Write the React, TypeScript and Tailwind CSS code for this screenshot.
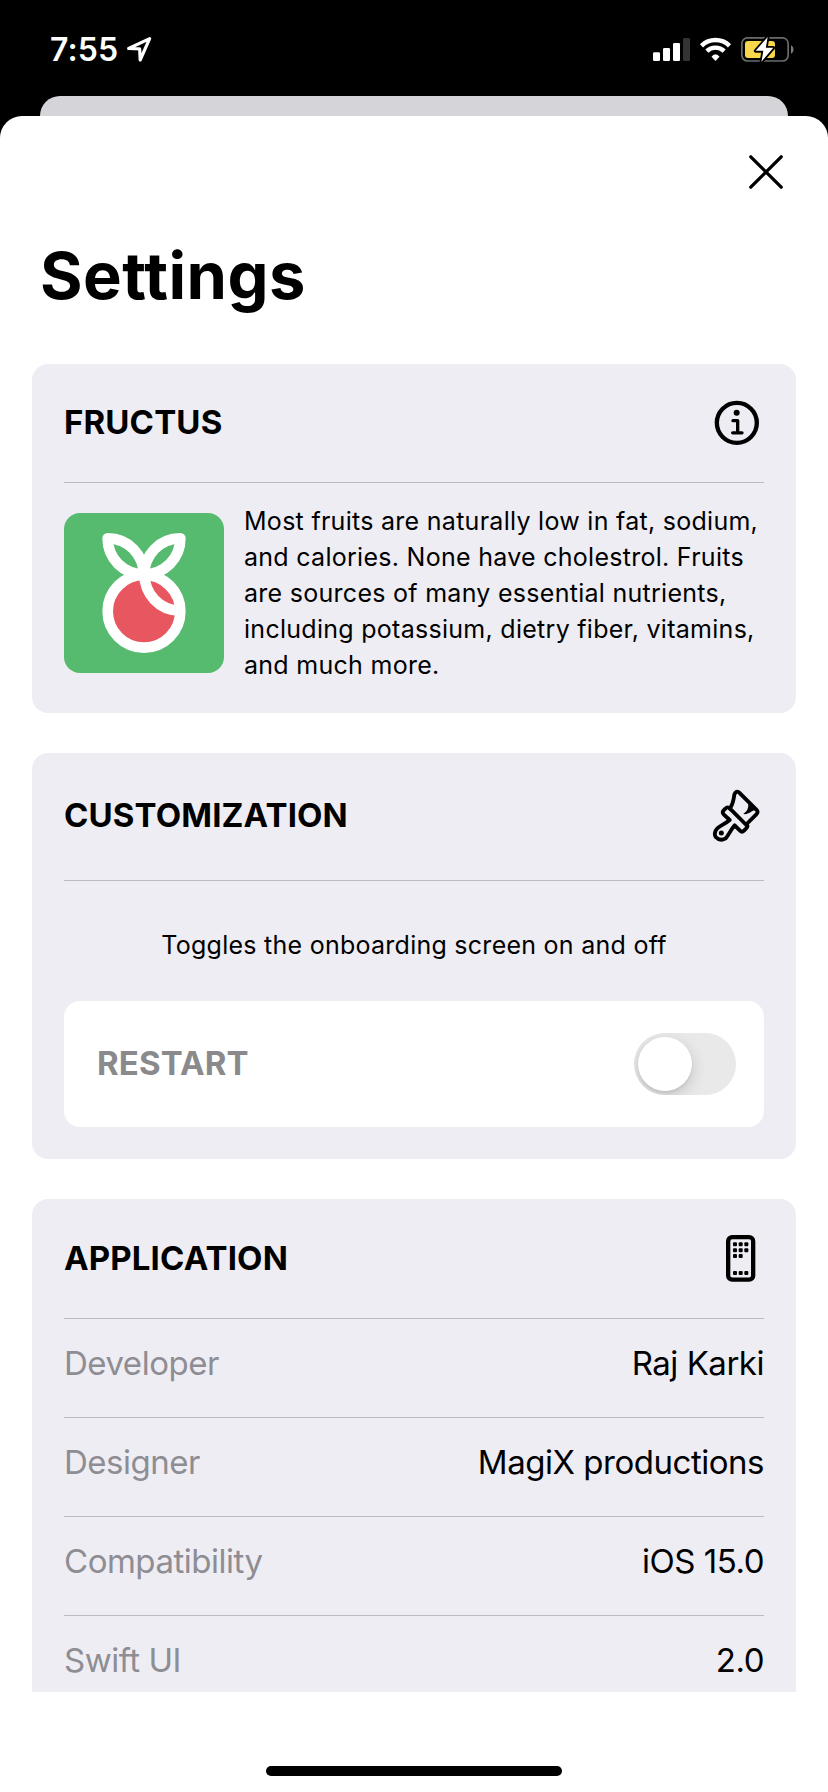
import type { ReactNode } from "react";

function LocationArrow() {
  return (
    <svg viewBox="378 110 80 80" className="h-[26.67px] w-[26.67px]" fill="none">
      <path
        d="M449 118 L386 147.5 L419 148.5 L420.5 182 Z"
        stroke="#fff"
        strokeWidth="9.5"
        strokeLinejoin="round"
      />
    </svg>
  );
}

function StatusIcons() {
  return (
    <svg viewBox="66 48 430 82" className="h-[27.33px] w-[143.33px]" fill="none">
      <rect x="69" y="96.5" width="21" height="26.5" rx="4" fill="#fff" />
      <rect x="99" y="84" width="21" height="39" rx="4" fill="#fff" />
      <rect x="129" y="69" width="21" height="54" rx="4" fill="#fff" />
      <rect x="159" y="54" width="21" height="69" rx="4" fill="#333335" />

      <path d="M214.500 77.500 A60 60 0 0 1 298.500 77.500" stroke="#fff" strokeWidth="13.500" />
      <path d="M230.500 93.500 A37 37 0 0 1 282.500 93.500" stroke="#fff" strokeWidth="13" />
      <path d="M256.500 123 L244.500 110.500 Q249 103 256.500 103 Q264 103 268.500 110.500 Z" fill="#fff" />

      <rect x="335.5" y="53.5" width="139" height="69.500" rx="17" stroke="#6b6b6b" strokeWidth="5" />
      <path d="M483 76 C493 80 493 97 483 101 Z" fill="#7a7a7a" />
      <rect x="345" y="63" width="90" height="51" rx="9" fill="#f8d84a" />
      <path
        d="M413 51 L377 92.500 H400 L394.500 125 L430 83.500 H407.500 Z"
        fill="#fff"
        stroke="#000"
        strokeWidth="11"
        strokeLinejoin="round"
        paintOrder="stroke"
      />
    </svg>
  );
}

function CloseIcon() {
  return (
    <svg viewBox="0 0 36 36" className="size-9" fill="none">
      <path d="M2.800 2.800 L33.200 33.200 M33.200 2.800 L2.800 33.200" stroke="#000" strokeWidth="3.300" strokeLinecap="round" />
    </svg>
  );
}

function InfoIcon() {
  return (
    <svg viewBox="73 120 138 138" className="mr-[4px] size-[46px]" fill="none">
      <circle cx="141.500" cy="188.500" r="60" stroke="#000" strokeWidth="13" />
      <circle cx="141" cy="158" r="9" fill="#000" />
      <path
        d="M130 182 H144 V218 M129 218.500 H157"
        stroke="#000"
        strokeWidth="10"
        strokeLinecap="round"
        strokeLinejoin="round"
      />
    </svg>
  );
}

function PaintbrushIcon() {
  return (
    <svg viewBox="66 58 144 160" className="mr-[4px] h-[53.33px] w-[48px]" fill="none">
      <g stroke="#000" strokeWidth="11.500" strokeLinecap="round" strokeLinejoin="round">
        <path d="M122 113 C130 100 131 88 133 75 Q137 62 147 68 L199 120 Q206 127 199 134 L170 163" />
        <path d="M120 117 L172 169" />
        <path d="M120 117 Q113 109 106 117 L101 122 Q95 128 101 134 L119 151 C104 164 92 167 82 176 Q70 188 77 202 Q90 216 107 206 C117 196 120 182 134 167 L150 183 Q156 189 162 183 L168 177 Q175 171 170 163" />
      </g>
      <path d="M174 101 L195 122 C182 124 176 136 160 133 C172 125 177 114 174 101 Z" fill="#000" />
      <circle cx="94" cy="190" r="7.500" fill="#000" />
    </svg>
  );
}

const appDots = [
  [105, 103], [122, 103], [139, 103],
  [105, 120.5], [122, 120.5], [139, 120.5],
  [105, 138], [122, 138],
  [105, 189], [122, 189], [139, 189],
];

function PhoneIcon() {
  return (
    <svg viewBox="78 75 88 140" className="mr-[8.500px] h-[46.67px] w-[29.33px]" fill="none">
      <rect x="84.500" y="81.500" width="75" height="127.500" rx="12" stroke="#000" strokeWidth="13" />
      {appDots.map(([x, y]) => (
        <rect key={`${x}-${y}`} x={x - 6} y={y - 6} width="12" height="12" rx="3" fill="#000" />
      ))}
    </svg>
  );
}

function FruitLogo() {
  return (
    <svg viewBox="72 69 480 480" className="size-40 shrink-0 rounded-2xl bg-[#56bb6e]" fill="none">
      <circle cx="312" cy="364" r="109" fill="#e85660" />
      <g stroke="#fff" strokeWidth="32" strokeLinejoin="round">
        <circle cx="312" cy="364" r="109" />
        <path d="M203 145 C266 145 310 195 312 254 C250 252 203 206 203 145 Z" />
        <path d="M421 145 C358 145 314 195 312 254 C374 252 421 206 421 145 Z" />
        <path d="M313 250 C313 312 358 362 421 362" />
      </g>
    </svg>
  );
}

function Card({ children }: { children: ReactNode }) {
  return <section className="rounded-2xl bg-[#eeedf3] px-8">{children}</section>;
}

function CardTitle({ children }: { children: ReactNode }) {
  return <h2 className="pb-[2px] text-[33px] leading-10 font-bold tracking-[0.14px]">{children}</h2>;
}

const rows = [
  ["Developer", "Raj Karki"],
  ["Designer", "MagiX productions"],
  ["Compatibility", "iOS 15.0"],
  ["Swift UI", "2.0"],
];

export default function App() {
  return (
    <div className="flex h-[1792px] w-[828px] flex-col overflow-hidden bg-black font-['Inter',sans-serif] text-black [font-variant-ligatures:none]">
      <header className="flex h-24 shrink-0 items-center justify-between pt-[3px] pr-[33px] pl-[50px] text-white">
        <div className="flex items-center gap-2">
          <span className="text-[32px] leading-10 font-semibold tracking-[0.1px]">7:55</span>
          <LocationArrow />
        </div>
        <StatusIcons />
      </header>

      <div className="mx-10 -mb-5 h-10 shrink-0 rounded-t-[20px] bg-[#d5d4d9]" />

      <main className="relative flex grow flex-col rounded-t-[22px] bg-white">
        <div className="flex h-[1576px] shrink-0 flex-col overflow-hidden px-8">
          <div className="flex h-[120px] shrink-0 items-center justify-end pr-3 pb-2">
            <button aria-label="Close">
              <CloseIcon />
            </button>
          </div>
          <h1 className="mb-12 pl-2 text-[65px] leading-[80px] font-bold tracking-[0.48px]">Settings</h1>

          <div className="flex flex-col gap-10">
            <Card>
              <div className="flex h-[118px] items-center justify-between">
                <CardTitle>FRUCTUS</CardTitle>
                <InfoIcon />
              </div>
              <div className="flex items-center gap-5 border-t border-[#bcbbc0] pt-5 pb-[30px]">
                <FruitLogo />
                <p className="text-[25px] leading-9 tracking-[0.28px] whitespace-nowrap">
                  Most fruits are naturally low in fat, sodium,
                  <br />
                  and calories. None have cholestrol. Fruits
                  <br />
                  are sources of many essential nutrients,
                  <br />
                  including potassium, dietry fiber, vitamins,
                  <br />
                  and much more.
                </p>
              </div>
            </Card>

            <Card>
              <div className="flex h-[127px] items-center justify-between pb-px">
                <CardTitle>CUSTOMIZATION</CardTitle>
                <PaintbrushIcon />
              </div>
              <div className="border-t border-[#bcbbc0] pb-8">
                <p className="flex h-[120px] items-center justify-center pt-[7px] text-[25px] leading-9 tracking-[0.26px]">
                  Toggles the onboarding screen on and off
                </p>
                <div className="flex h-[126px] items-center justify-between rounded-2xl bg-white pr-7 pl-[33px]">
                  <span className="pb-[2px] text-[33px] leading-10 font-bold tracking-[0.13px] text-[#8a8a8d]">
                    RESTART
                  </span>
                  <button
                    role="switch"
                    aria-checked="false"
                    aria-label="Restart"
                    className="flex h-[62px] w-[102px] items-center overflow-hidden rounded-full bg-[#e9e9ea] p-1"
                  >
                    <span className="size-[54px] rounded-full bg-white shadow-[0_5px_16px_rgba(0,0,0,0.16),0_2px_3px_rgba(0,0,0,0.07)]" />
                  </button>
                </div>
              </div>
            </Card>

            <Card>
              <div className="flex h-[119px] items-center justify-between">
                <CardTitle>APPLICATION</CardTitle>
                <PhoneIcon />
              </div>
              {rows.map(([label, value]) => (
                <div
                  key={label}
                  className="flex h-[99px] items-center justify-between border-t border-[#bcbbc0] pb-[10px] text-[33px] leading-10 tracking-[-0.48px]"
                >
                  <span className="text-[#8e8d93]">{label}</span>
                  <span>{value}</span>
                </div>
              ))}
            </Card>
          </div>
        </div>

        <div className="mx-auto mt-[73.5px] h-[10px] w-[296px] shrink-0 rounded-full bg-black" />
      </main>
    </div>
  );
}
